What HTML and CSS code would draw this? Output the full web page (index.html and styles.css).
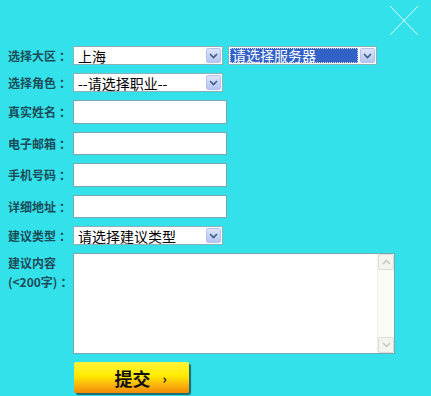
FILE: index.html
```html
<!DOCTYPE html>
<html lang="zh-CN">
<head>
    <meta charset="UTF-8">
    <title>建议反馈</title>
    <link rel="stylesheet" href="styles.css">
</head>
<body>
    <div class="panel">
        <a class="close" href="#" title="关闭">
            <svg width="30" height="31" viewBox="0 0 30 31">
                <line x1="1" y1="1" x2="29" y2="30" stroke="#ffffff" stroke-width="1" stroke-opacity="0.85"/>
                <line x1="29" y1="1" x2="1" y2="30" stroke="#ffffff" stroke-width="1" stroke-opacity="0.85"/>
            </svg>
        </a>

        <form class="form">
            <div class="row">
                <label class="label">选择大区<span class="colon">：</span></label>
                <div class="sel">
                    <span class="sel-text">上海</span>
                    <span class="sel-btn"><svg width="9" height="6" viewBox="0 0 9 6"><path d="M1 1 L4.5 4.5 L8 1" fill="none" stroke="#3f5a86" stroke-width="1.6"/></svg></span>
                </div>
                <div class="sel sel-server">
                    <span class="sel-text picked">请选择服务器</span>
                    <span class="sel-btn"><svg width="9" height="6" viewBox="0 0 9 6"><path d="M1 1 L4.5 4.5 L8 1" fill="none" stroke="#3f5a86" stroke-width="1.6"/></svg></span>
                </div>
            </div>
            <div class="row">
                <label class="label">选择角色<span class="colon">：</span></label>
                <div class="sel">
                    <span class="sel-text">--请选择职业--</span>
                    <span class="sel-btn"><svg width="9" height="6" viewBox="0 0 9 6"><path d="M1 1 L4.5 4.5 L8 1" fill="none" stroke="#3f5a86" stroke-width="1.6"/></svg></span>
                </div>
            </div>
            <div class="row">
                <label class="label">真实姓名<span class="colon">：</span></label>
                <input type="text" class="field">
            </div>
            <div class="row">
                <label class="label">电子邮箱<span class="colon">：</span></label>
                <input type="text" class="field">
            </div>
            <div class="row">
                <label class="label">手机号码<span class="colon">：</span></label>
                <input type="text" class="field">
            </div>
            <div class="row">
                <label class="label">详细地址<span class="colon">：</span></label>
                <input type="text" class="field">
            </div>
            <div class="row">
                <label class="label">建议类型<span class="colon">：</span></label>
                <div class="sel">
                    <span class="sel-text">请选择建议类型</span>
                    <span class="sel-btn"><svg width="9" height="6" viewBox="0 0 9 6"><path d="M1 1 L4.5 4.5 L8 1" fill="none" stroke="#3f5a86" stroke-width="1.6"/></svg></span>
                </div>
            </div>
            <div class="row row-top">
                <label class="label">建议内容<br>(&lt;200字)<span class="colon">：</span></label>
                <div class="memo">
                    <textarea class="memo-text"></textarea>
                    <div class="scroll">
                        <span class="scroll-btn"><svg width="9" height="6" viewBox="0 0 9 6"><path d="M1 5 L4.5 1.5 L8 5" fill="none" stroke="#c4c4bc" stroke-width="1.4"/></svg></span>
                        <span class="scroll-btn"><svg width="9" height="6" viewBox="0 0 9 6"><path d="M1 1 L4.5 4.5 L8 1" fill="none" stroke="#c4c4bc" stroke-width="1.4"/></svg></span>
                    </div>
                </div>
            </div>
            <div class="row">
                <span class="label"></span>
                <button type="button" class="submit">提交<span class="arrow">›</span></button>
            </div>
        </form>
    </div>
</body>
</html>
```

FILE: styles.css
```css
body {
    margin: 0;
    background: #33e1ea;
    font-family: "Noto Sans CJK SC", "Liberation Sans", sans-serif;
}

.panel {
    position: relative;
    width: 431px;
    height: 396px;
    overflow: hidden;
}

.close {
    position: absolute;
    left: 389px;
    top: 5px;
    display: block;
    line-height: 0;
}

.form {
    padding: 46px 0 0 8px;
}

.row {
    display: flex;
    align-items: center;
    margin-bottom: 8px;
}
.row-top {
    align-items: flex-start;
}

.label {
    width: 65px;
    flex: none;
    font-size: 12px;
    font-weight: bold;
    color: #1c4c58;
    line-height: 19px;
    white-space: nowrap;
}
.colon {
    margin-left: 3px;
}

/* fake select boxes */
.sel {
    position: relative;
    box-sizing: border-box;
    width: 150px;
    height: 19px;
    background: #fff;
    border: 1px solid #8bb0b8;
    display: flex;
    align-items: center;
}
.sel-server {
    width: 149px;
    margin-left: 5px;
}

.sel-text {
    font-size: 14px;
    line-height: 16px;
    color: #000;
    padding-left: 4px;
    white-space: nowrap;
}
.sel-text.picked {
    box-sizing: border-box;
    width: 128px;
    height: 15px;
    margin-left: 1px;
    padding-left: 2px;
    background: #3262c8;
    color: #fff;
    outline: 1px dotted #d0d8e8;
    outline-offset: -1px;
    line-height: 15px;
}

.sel-btn {
    position: absolute;
    right: 1px;
    top: 1px;
    box-sizing: border-box;
    width: 15px;
    height: 15px;
    border: 1px solid #b4c2ea;
    border-radius: 2px;
    background: linear-gradient(#dde5fb, #b6c6f2);
    display: flex;
    align-items: center;
    justify-content: center;
}

.field {
    box-sizing: border-box;
    width: 154px;
    height: 23.5px;
    margin: 0;
    padding: 2px 4px;
    border: 1px solid #7aa6b0;
    background: #fff;
    outline: none;
    font-size: 13px;
}

/* textarea with its old style scrollbar */
.memo {
    box-sizing: border-box;
    width: 322px;
    height: 101px;
    border: 1px solid #7aa6b0;
    background: #fff;
    display: flex;
}
.memo-text {
    flex: 1;
    border: none;
    outline: none;
    resize: none;
    padding: 2px 4px;
    margin: 0;
    overflow: hidden;
}
.scroll {
    width: 16px;
    background: #fbfbf6;
    border-left: 1px solid #efefe8;
    display: flex;
    flex-direction: column;
    justify-content: space-between;
}
.scroll-btn {
    box-sizing: border-box;
    height: 16px;
    border: 1px solid #deded6;
    border-radius: 2px;
    background: #f4f4ee;
    display: flex;
    align-items: center;
    justify-content: center;
}

.submit {
    box-sizing: border-box;
    width: 115px;
    height: 31px;
    margin: 0 0 0 1px;
    border: none;
    border-radius: 2px;
    background: linear-gradient(#fff43a 0%, #ffea00 45%, #fbbc0c 70%, #f18a06 100%);
    box-shadow: 2px 2px 1px #1f6a6e;
    font-family: "Noto Sans CJK SC", sans-serif;
    font-size: 18px;
    font-weight: bold;
    color: #111;
    padding: 0 0 0 18px;
    cursor: pointer;
}
.arrow {
    font-size: 13px;
    margin-left: 12px;
    vertical-align: 2px;
}
```
